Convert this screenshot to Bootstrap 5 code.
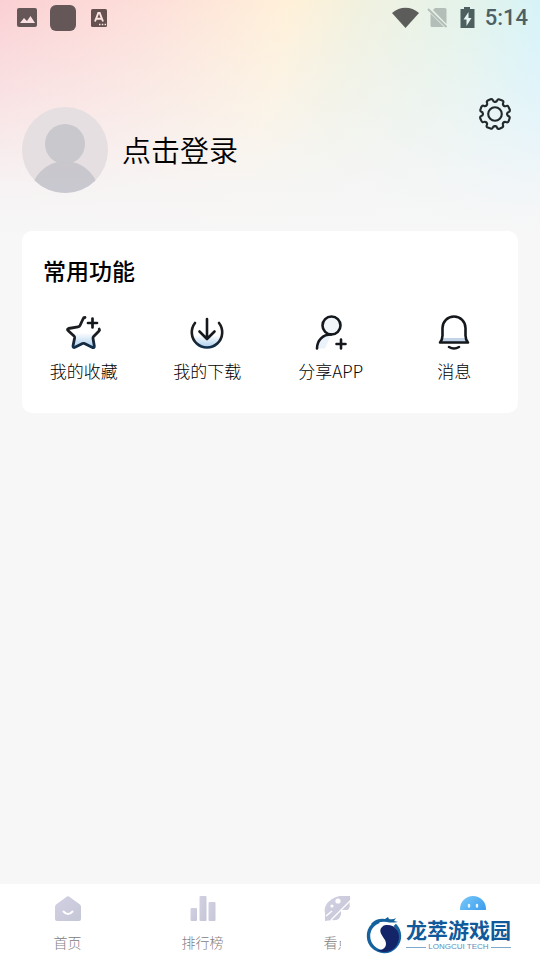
<!DOCTYPE html>
<html lang="zh-CN">
<head>
<meta charset="utf-8">
<meta name="viewport" content="width=device-width, initial-scale=1">
<title>我的</title>
<link href="https://cdn.jsdelivr.net/npm/bootstrap@5.3.0/dist/css/bootstrap.min.css" rel="stylesheet">
<style>
  body {
    font-family: Roboto, "Noto Sans CJK SC", sans-serif;
    color: #000;
    background:
      linear-gradient(to bottom, rgba(247,247,247,0) 0, rgba(246,246,247,.5) 110px, rgba(246,246,247,.88) 185px, #f7f7f7 236px),
      linear-gradient(104deg, #fbd0d4 0%, #fddfd9 25%, #fff1d9 49%, #f1f1df 60%, #e2f3ec 80%, #d0f3fe 95%) top / 100% 240px no-repeat,
      #f7f7f7;
  }
  a { color: inherit; text-decoration: none; }
  svg { display: block; flex: none; }
  .status-bar { height: 36px; padding: 0 12px 0 16px; }
  .status-time { font-size: 22px; line-height: 38px; font-weight: 500; color: #4c6065; }
  .profile { padding: 61px 28px 38px 22px; }
  .login-link { font-size: 29px; line-height: 40px; padding-top: 4px; font-weight: 350; }
  .profile-user { margin-top: 10px; gap: 14px; }
  .gear-btn { width: 34px; height: 34px; }
  .tool-card { margin: 0 22px; border-radius: 10px; padding: 26px 0 28px; }
  .tool-title { font-size: 23px; line-height: 32px; padding-left: 21px; margin-bottom: 24px; font-weight: 500; }
  .tool-grid { padding-right: 2px; }
  .tool-label { font-family: "Noto Sans CJK SC", sans-serif; font-size: 17px; line-height: 26px; margin: 5px 0 1px; font-weight: 300; }
  .line-icon { fill: none; stroke: #14181c; stroke-width: 3; stroke-linecap: round; stroke-linejoin: round; }
  .tab-bar { height: 76px; }
  .tab-label { font-size: 14px; line-height: 20px; margin-top: 10px; color: #808083; font-weight: 300; }
  .brand-overlay { right: 0; bottom: 0; width: 199px; height: 50px; padding-left: 24px; gap: 3px; }
  .brand-name { font-size: 21px; line-height: 24px; font-weight: 700; color: #10599a; }
  .brand-sub { font-family: "Liberation Sans", sans-serif; font-size: 8px; line-height: 8px; color: #5a8fbd; gap: 2px; }
  .brand-rule { height: 1px; background: #7fa9cc; }
</style>
</head>
<body class="min-vh-100 d-flex flex-column">

<header>
  <div class="status-bar d-flex align-items-center justify-content-between">
    <div class="d-flex align-items-center">
      <svg width="22" height="22" viewBox="0 0 22 22"><rect x="1" y="1" width="20" height="19" rx="2" fill="#655658"/><path d="M4 16l4-5 3 3 3.500-5L19 16z" fill="#fbe0e1"/></svg>
      <svg class="ms-2" width="34" height="28" viewBox="0 0 34 28"><rect x="4" y="1" width="26" height="26" rx="6" fill="#655658"/></svg>
      <svg class="ms-2" width="22" height="22" viewBox="0 0 22 22"><rect x="3" y="2" width="16" height="18" rx="1.500" fill="#655250"/><path d="M7 14.500L10.300 6h1.400L15 14.500M8.300 11.700h5.400" fill="none" stroke="#fde5e2" stroke-width="1.900"/><path d="M11 17.500h1.500m1.300 0h1.500m1.300 0h1.500" stroke="#fde5e2" stroke-width="1.500"/></svg>
    </div>
    <div class="d-flex align-items-center">
      <svg width="27" height="22" viewBox="0 0 27 22"><path d="M0 6C8-1 19-1 27 6L13.500 21z" fill="#5c5d5a"/></svg>
      <svg class="ms-2" width="22" height="22" viewBox="0 0 22 22"><path d="M8 1h10a1.500 1.500 0 0 1 1.500 1.500V17L6 3zM3.500 6.500L17 20H5a1.500 1.500 0 0 1-1.500-1.500z" fill="#b4beb8"/><path d="M1 2l18.500 18" stroke="#b4beb8" stroke-width="2"/></svg>
      <svg class="ms-2" width="20" height="24" viewBox="0 0 20 24"><path d="M7 1h6v2h4.500v19h-14V3H7z" fill="#4d605f"/><path d="M11.500 6L6.500 13.500h3V20l5-8h-3z" fill="#e6f5f3"/></svg>
      <time class="status-time ms-2">5:14</time>
    </div>
  </div>

  <div class="profile d-flex align-items-start justify-content-between">
    <a href="#login" class="profile-user d-flex align-items-center">
      <svg width="86" height="86" viewBox="0 0 86 86" aria-hidden="true">
        <clipPath id="face"><circle cx="43" cy="43" r="43"/></clipPath>
        <linearGradient id="bust" x1="0" y1="0" x2="0" y2="1"><stop stop-color="#c9c7cc"/><stop offset="1" stop-color="#c8cad6"/></linearGradient>
        <g clip-path="url(#face)"><rect width="86" height="86" fill="#e6dfe1"/><circle cx="43" cy="37" r="20" fill="#c9c8cd"/><ellipse cx="43" cy="91" rx="35" ry="37" fill="url(#bust)"/></g>
      </svg>
      <span class="login-link">点击登录</span>
    </a>
    <button type="button" class="gear-btn btn p-0 border-0" aria-label="设置">
      <svg width="34" height="34" viewBox="-17.500 -17.500 35 35" fill="none" stroke="#22292c" stroke-width="2.200" stroke-linecap="round">
        <defs><path id="cog" d="M12.500 0Q12.500 1.800 13.700 2.200Q15.600 2.800 15 4.600L14 7.400Q13.100 9.300 11.400 8.400Q10.100 7.500 8.840 8.840"/></defs>
        <use href="#cog"/><use href="#cog" transform="rotate(45)"/><use href="#cog" transform="rotate(90)"/><use href="#cog" transform="rotate(135)"/><use href="#cog" transform="rotate(180)"/><use href="#cog" transform="rotate(225)"/><use href="#cog" transform="rotate(270)"/><use href="#cog" transform="rotate(315)"/>
        <circle r="7"/>
      </svg>
    </button>
  </div>
</header>

<main class="flex-grow-1">
  <section class="tool-card bg-white">
    <h1 class="tool-title">常用功能</h1>
    <div class="tool-grid"><div class="row g-0 text-center">
      <div class="col-3"><a href="#favorites" class="d-flex flex-column align-items-center">
        <svg class="line-icon" width="40" height="40" viewBox="0 0 40 40">
          <defs><linearGradient id="tint" x1="0" y1="0" x2="0" y2="1"><stop offset=".5" stop-color="#fff"/><stop offset="1" stop-color="#a9cdec"/></linearGradient>
          <linearGradient id="ink" x1="0" y1="0" x2="0" y2="1"><stop offset=".6" stop-color="#1b1d20"/><stop offset="1" stop-color="#12304d"/></linearGradient></defs>
          <path d="M21 4.500q-1.500 0-2 1.500l-3 6.500q-.5 1.200-2 1.400L4.500 15.500q-1.700.5-.5 2l6 5.500q.8.800.6 2L9 33q0 2 2 1.300l7.500-3.700q1-.5 2 0l8 4q2 .5 1.800-1.500L29 25.500q-.2-1.200.6-2l5.400-5.500q1-1 .2-2" fill="url(#tint)" stroke="url(#ink)" stroke-width="2.800"/>
          <path d="M28.500 5.500v9M24 10h9" stroke-width="2.700"/>
        </svg><span class="tool-label">我的收藏</span></a></div>
      <div class="col-3"><a href="#downloads" class="d-flex flex-column align-items-center">
        <svg class="line-icon" width="40" height="40" viewBox="0 0 40 40"><path d="M8 10A15.200 15.200 0 1 0 32 10" fill="url(#tint)" stroke="url(#ink)" stroke-width="2.600"/><path d="M20 6v19M12.500 18.500l7.500 7.500 7.500-7.500" stroke-width="2.600"/></svg>
        <span class="tool-label">我的下载</span></a></div>
      <div class="col-3"><a href="#share" class="d-flex flex-column align-items-center">
        <svg class="line-icon" width="40" height="40" viewBox="0 0 40 40"><path d="M6 35.500C6 27 12 21.500 20 21.500L14 35.500z" fill="#eaf3fa" stroke="none"/><circle cx="20.500" cy="12.500" r="9" fill="#f0f6fa" stroke-width="2.600"/><path d="M6 35.500C6 27 12 21.500 20 21.500" stroke-width="2.600"/><path d="M30 26.500v9M25.500 31h9" stroke-width="2.600"/></svg>
        <span class="tool-label">分享APP</span></a></div>
      <div class="col-3"><a href="#messages" class="d-flex flex-column align-items-center">
        <svg class="line-icon" width="40" height="40" viewBox="0 0 40 40"><path d="M8.500 25h23l1 5h-25z" fill="#c3d3e8" stroke="none"/><path d="M6 29.500q2.500-3 2.500-7V15a11.500 11.500 0 0 1 23 0v7.500q0 4 2.500 7z" stroke-width="2.600"/><path d="M15 34q5 3 10 0" stroke-width="2.600"/></svg>
        <span class="tool-label">消息</span></a></div>
    </div></div>
  </section>
</main>

<nav class="tab-bar bg-white position-relative" aria-label="主导航">
  <div class="row g-0 text-center pt-2">
    <div class="col-3"><a href="#home" class="d-flex flex-column align-items-center">
      <svg class="mt-1" width="30" height="27" viewBox="0 0 30 27"><defs><linearGradient id="mute" x1="0" y1="0" x2="1" y2="1"><stop stop-color="#d2d1e4"/><stop offset="1" stop-color="#c5c6d6"/></linearGradient></defs><path d="M13 1.200q2-1.700 4 0l10 7.300q1 1 1 2.500V23q0 2-2 2H4q-2 0-2-2V11q0-1.500 1-2.500z" fill="url(#mute)"/><path d="M10.500 15.500q4.500 5 9 0" fill="none" stroke="#fff" stroke-width="2" stroke-linecap="round"/></svg>
      <span class="tab-label">首页</span></a></div>
    <div class="col-3"><a href="#ranking" class="d-flex flex-column align-items-center">
      <svg class="mt-1" width="30" height="27" viewBox="0 0 30 27" fill="url(#mute)"><rect x="2.500" y="12" width="6.500" height="13" rx="1"/><rect x="11.500" y="0" width="7" height="25" rx="1"/><rect x="20.500" y="6" width="7" height="19" rx="1"/></svg>
      <span class="tab-label">排行榜</span></a></div>
    <div class="col-3"><a href="#discover" class="d-flex flex-column align-items-center">
      <svg class="mt-1" width="30" height="27" viewBox="0 0 30 27"><path d="M27 0Q17-2 9 3Q0 9 2 17L2 25l7-1q5 1 8-4l6-6Q28 9 27 0z" fill="url(#mute)"/><circle cx="15" cy="5" r="2.600" fill="#fff"/><circle cx="9" cy="10" r="1.600" fill="#fff"/><path d="M3 20L9 15M8 24l20-20" stroke="#fff" stroke-width="1.400"/><path d="M18 16l9-8q0 6-5 7zM12 23l5-5q1 5-4 6z" fill="url(#mute)"/></svg>
      <span class="tab-label">看点</span></a></div>
    <div class="col-3"><a href="#mine" class="d-flex flex-column align-items-center" aria-current="page" aria-label="我的">
      <svg class="mt-1" width="30" height="27" viewBox="0 0 30 27"><defs><linearGradient id="live" x1="0" y1="0" x2="1" y2="1"><stop stop-color="#7acbf9"/><stop offset="1" stop-color="#288ce9"/></linearGradient></defs><circle cx="15" cy="13" r="13" fill="url(#live)"/><path d="M11 9v1.500M19 9v1.500" stroke="#e8f7ff" stroke-width="2.400" stroke-linecap="round"/></svg>
    </a></div>
  </div>

  <div class="brand-overlay position-absolute bg-white d-flex align-items-center">
    <svg width="38" height="38" viewBox="0 0 38 38" aria-hidden="true">
      <circle cx="19" cy="20" r="15.500" fill="none" stroke="#16629f" stroke-width="3.400" stroke-dasharray="80 17.400" transform="rotate(-46 19 20)"/>
      <path d="M21 9C29 8 34 14 34 21 34 30 27 36 19 36c-3 0-5-1-7-2 7 1 11-4 8-10-3-5-7-9-3-13q1.500-2 4-2z" fill="#142469"/>
      <path d="M8 6q5-4 12-3l3-2 1 2q4 1 7-1l-2 3 4 1q-7 1-11 0-8-1-14 3l-2-1z" fill="#14609b"/>
    </svg>
    <div>
      <div class="brand-name">龙萃游戏园</div>
      <div class="brand-sub d-flex align-items-center"><span class="brand-rule flex-grow-1"></span>LONGCUI TECH<span class="brand-rule flex-grow-1"></span></div>
    </div>
  </div>
</nav>

<script src="https://cdn.jsdelivr.net/npm/bootstrap@5.3.0/dist/js/bootstrap.bundle.min.js"></script>
</body>
</html>
